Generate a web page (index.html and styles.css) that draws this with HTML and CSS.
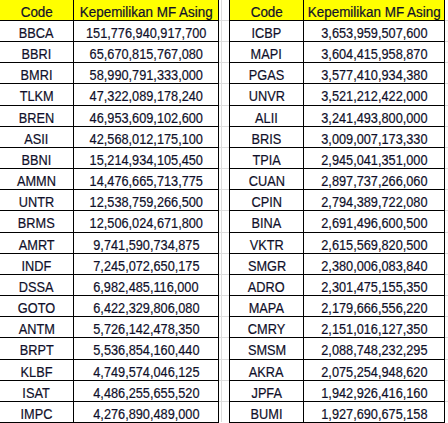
FILE: index.html
```html
<!DOCTYPE html>
<html>
<head>
<meta charset="utf-8">
<link rel="stylesheet" href="styles.css">
</head>
<body>
<div class="sheet">
  <div class="table left">
    <div class="cell head"><span>Code</span></div><div class="cell head"><span>Kepemilikan MF Asing</span></div>
    <div class="cell"><span>BBCA</span></div><div class="cell"><span>151,776,940,917,700</span></div>
    <div class="cell"><span>BBRI</span></div><div class="cell"><span>65,670,815,767,080</span></div>
    <div class="cell"><span>BMRI</span></div><div class="cell"><span>58,990,791,333,000</span></div>
    <div class="cell"><span>TLKM</span></div><div class="cell"><span>47,322,089,178,240</span></div>
    <div class="cell"><span>BREN</span></div><div class="cell"><span>46,953,609,102,600</span></div>
    <div class="cell"><span>ASII</span></div><div class="cell"><span>42,568,012,175,100</span></div>
    <div class="cell"><span>BBNI</span></div><div class="cell"><span>15,214,934,105,450</span></div>
    <div class="cell"><span>AMMN</span></div><div class="cell"><span>14,476,665,713,775</span></div>
    <div class="cell"><span>UNTR</span></div><div class="cell"><span>12,538,759,266,500</span></div>
    <div class="cell"><span>BRMS</span></div><div class="cell"><span>12,506,024,671,800</span></div>
    <div class="cell"><span>AMRT</span></div><div class="cell"><span>9,741,590,734,875</span></div>
    <div class="cell"><span>INDF</span></div><div class="cell"><span>7,245,072,650,175</span></div>
    <div class="cell"><span>DSSA</span></div><div class="cell"><span>6,982,485,116,000</span></div>
    <div class="cell"><span>GOTO</span></div><div class="cell"><span>6,422,329,806,080</span></div>
    <div class="cell"><span>ANTM</span></div><div class="cell"><span>5,726,142,478,350</span></div>
    <div class="cell"><span>BRPT</span></div><div class="cell"><span>5,536,854,160,440</span></div>
    <div class="cell"><span>KLBF</span></div><div class="cell"><span>4,749,574,046,125</span></div>
    <div class="cell"><span>ISAT</span></div><div class="cell"><span>4,486,255,655,520</span></div>
    <div class="cell"><span>IMPC</span></div><div class="cell"><span>4,276,890,489,000</span></div>
  </div>
  <div class="filler gapfill">
    <div></div><div></div><div></div><div></div><div></div><div></div><div></div><div></div><div></div><div></div>
    <div></div><div></div><div></div><div></div><div></div><div></div><div></div><div></div><div></div><div></div>
  </div>
  <div class="table right">
    <div class="cell head"><span>Code</span></div><div class="cell head"><span>Kepemilikan MF Asing</span></div>
    <div class="cell"><span>ICBP</span></div><div class="cell"><span>3,653,959,507,600</span></div>
    <div class="cell"><span>MAPI</span></div><div class="cell"><span>3,604,415,958,870</span></div>
    <div class="cell"><span>PGAS</span></div><div class="cell"><span>3,577,410,934,380</span></div>
    <div class="cell"><span>UNVR</span></div><div class="cell"><span>3,521,212,422,000</span></div>
    <div class="cell"><span>ALII</span></div><div class="cell"><span>3,241,493,800,000</span></div>
    <div class="cell"><span>BRIS</span></div><div class="cell"><span>3,009,007,173,330</span></div>
    <div class="cell"><span>TPIA</span></div><div class="cell"><span>2,945,041,351,000</span></div>
    <div class="cell"><span>CUAN</span></div><div class="cell"><span>2,897,737,266,060</span></div>
    <div class="cell"><span>CPIN</span></div><div class="cell"><span>2,794,389,722,080</span></div>
    <div class="cell"><span>BINA</span></div><div class="cell"><span>2,691,496,600,500</span></div>
    <div class="cell"><span>VKTR</span></div><div class="cell"><span>2,615,569,820,500</span></div>
    <div class="cell"><span>SMGR</span></div><div class="cell"><span>2,380,006,083,840</span></div>
    <div class="cell"><span>ADRO</span></div><div class="cell"><span>2,301,475,155,350</span></div>
    <div class="cell"><span>MAPA</span></div><div class="cell"><span>2,179,666,556,220</span></div>
    <div class="cell"><span>CMRY</span></div><div class="cell"><span>2,151,016,127,350</span></div>
    <div class="cell"><span>SMSM</span></div><div class="cell"><span>2,088,748,232,295</span></div>
    <div class="cell"><span>AKRA</span></div><div class="cell"><span>2,075,254,948,620</span></div>
    <div class="cell"><span>JPFA</span></div><div class="cell"><span>1,942,926,416,160</span></div>
    <div class="cell"><span>BUMI</span></div><div class="cell"><span>1,927,690,675,158</span></div>
  </div>
  <div class="filler endfill">
    <div></div><div></div><div></div><div></div><div></div><div></div><div></div><div></div><div></div><div></div>
    <div></div><div></div><div></div><div></div><div></div><div></div><div></div><div></div><div></div><div></div>
  </div>
</div>
</body>
</html>
```

FILE: styles.css
```css
html, body {
  margin: 0;
  padding: 0;
  background: #ffffff;
}
body {
  width: 448px;
  height: 423px;
  overflow: hidden;
  font-family: "Liberation Sans", Arial, sans-serif;
  font-size: 14px;
  color: #10102a;
}
.sheet {
  display: flex;
  align-items: flex-start;
  margin: -1px 0 0 -1px;
}
.table {
  display: grid;
  gap: 1px;
  padding: 1px;
  background: #000000;
  grid-template-rows: 20px repeat(19, 20.16px);
}
.left {
  grid-template-columns: 73px 144px;
}
.right {
  grid-template-columns: 73px 140px;
}
.cell {
  background: #ffffff;
  display: flex;
  justify-content: center;
  align-items: flex-start;
  padding-top: 4px;
  line-height: 16px;
  overflow: hidden;
  white-space: nowrap;
}
.cell.head {
  background: #ffff00;
}
.cell span {
  display: inline-block;
  transform: scaleX(0.91);
  -webkit-text-stroke: 0.2px #10102a;
}
.cell.head span {
  transform: scaleX(0.96);
}
.filler {
  display: grid;
  row-gap: 1px;
  padding-top: 1px;
  background: #dcdcdc;
  grid-template-rows: 20px repeat(19, 20.16px);
}
.filler div {
  background: #ffffff;
}
.gapfill {
  width: 10px;
}
.gapfill div {
  background: linear-gradient(to right, #ffffff 2px, #dcdcdc 2px, #dcdcdc 3px, #ffffff 3px);
}
.endfill {
  flex: 1;
}
```
